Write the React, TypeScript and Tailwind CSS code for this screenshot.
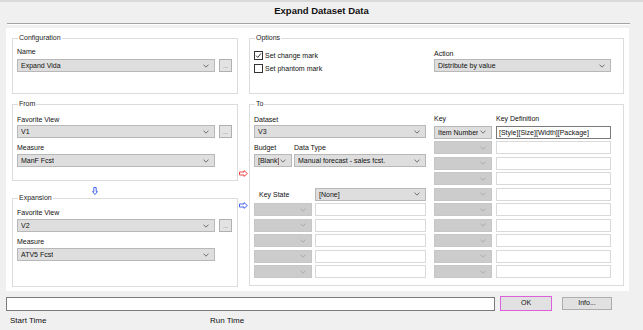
import type { ReactNode } from 'react';

function Chevron({ color = '#555' }: { color?: string }) {
  return (
    <svg width="6" height="4" viewBox="0 0 6 4" className="shrink-0">
      <path d="M0.5 0.6 L3 3.2 L5.5 0.6" fill="none" stroke={color} strokeWidth="0.8" />
    </svg>
  );
}

function Combo({ value, className = '' }: { value?: string; className?: string }) {
  return (
    <div
      className={`flex h-[13px] shrink-0 items-center justify-between border border-[#b8b8b8] bg-[#dedede] pl-[3px] pr-[5px] leading-[11px] ${className}`}
    >
      <span className="truncate">{value}</span>
      <Chevron />
    </div>
  );
}

function EmptyCombo() {
  return (
    <div className="flex h-[13px] w-[58px] shrink-0 items-center justify-end border border-[#c6c6c6] bg-[#cccccc] pr-[5px]">
      <Chevron color="#a5a5a5" />
    </div>
  );
}

function TextBox({ value, className = '' }: { value?: string; className?: string }) {
  return (
    <div
      className={`flex h-[13px] items-center border bg-white pl-[2px] leading-[11px] ${
        value ? 'border-[#7a7a7a]' : 'border-[#d9d9d9]'
      } ${className}`}
    >
      {value}
    </div>
  );
}

function DotButton() {
  return (
    <div className="flex h-[13px] w-[13px] shrink-0 items-end justify-center border border-[#b0b0b0] bg-[#e3e3e3] pb-[2px] text-[6px] leading-[6px] text-[#555]">
      ...
    </div>
  );
}

function Group({ title, className = '', children }: { title: string; className?: string; children: ReactNode }) {
  return (
    <div className={`flex flex-col border border-[#dcdcdc] pl-[4px] ${className}`}>
      <span className="-mt-[5px] ml-[1px] h-[8px] w-fit bg-white px-[1px] leading-[8px] text-[#222]">{title}</span>
      {children}
    </div>
  );
}

function Label({ children, className = '' }: { children: ReactNode; className?: string }) {
  return <span className={`h-[8px] leading-[8px] ${className}`}>{children}</span>;
}

function CheckBox({ checked, label }: { checked?: boolean; label: string }) {
  return (
    <div className="flex h-[9px] items-center gap-[2px]">
      <span className="flex h-[9px] w-[9px] items-center justify-center border border-[#333] bg-white">
        {checked && (
          <svg width="7" height="7" viewBox="0 0 7 7">
            <path d="M1 3.6 L2.8 5.4 L6 1.4" fill="none" stroke="#222" strokeWidth="0.9" />
          </svg>
        )}
      </span>
      <span className="leading-[9px]">{label}</span>
    </div>
  );
}

function RightArrow({ color }: { color: string }) {
  return (
    <svg width="9" height="7" viewBox="0 0 9 7">
      <path d="M0.5 2 H5 V0.6 L8.4 3.5 L5 6.4 V5 H0.5 Z" fill="none" stroke={color} strokeWidth="0.9" />
    </svg>
  );
}

function DownArrow() {
  return (
    <svg width="6" height="8" viewBox="0 0 6 8">
      <path d="M1.8 0.5 H4.2 V4.6 H5.5 L3 7.5 L0.5 4.6 H1.8 Z" fill="none" stroke="#3355ee" strokeWidth="0.9" />
    </svg>
  );
}

export default function App() {
  const keyRows = [0, 1, 2, 3, 4, 5, 6, 7, 8];
  const stateRows = [0, 1, 2, 3, 4];

  return (
    <div className="h-[330px] w-[643px] overflow-hidden border-t-2 border-[#dadada] bg-[#f0f0f0] font-['Liberation_Sans',Arial,sans-serif] text-[7px] text-[#111]">
      <div className="flex h-[19px] items-center justify-center text-[9.5px] font-bold">Expand Dataset Data</div>
      <div className="ml-[7px] mt-[2px] h-px w-[623px] bg-[#a3a3a3]" />
      <div className="ml-[7px] h-px w-[623px] bg-white" />

      <div className="ml-[6px] mt-[3px] flex h-[263px] w-[623px] bg-white pl-[6px] pt-[10px]">
        {/* left column */}
        <div className="flex w-[226px] flex-col">
          <Group title="Configuration" className="h-[56px]">
            <Label className="mt-[6px]">Name</Label>
            <div className="mt-[3px] flex gap-[4px]">
              <Combo value="Expand Vida" className="w-[198px]" />
              <DotButton />
            </div>
          </Group>

          <Group title="From" className="mt-[10px] h-[77px]">
            <Label className="mt-[8px]">Favorite View</Label>
            <div className="mt-[1px] flex gap-[4px]">
              <Combo value="V1" className="w-[198px]" />
              <DotButton />
            </div>
            <Label className="mt-[6px]">Measure</Label>
            <Combo value="ManF Fcst" className="mt-[2px] w-[198px]" />
          </Group>

          <div className="flex h-[17px] items-center pl-[80px] pt-[2px]">
            <DownArrow />
          </div>

          <Group title="Expansion" className="h-[89px]">
            <Label className="mt-[7px]">Favorite View</Label>
            <div className="mt-[2px] flex gap-[4px]">
              <Combo value="V2" className="w-[198px]" />
              <DotButton />
            </div>
            <Label className="mt-[6px]">Measure</Label>
            <Combo value="ATV5 Fcst" className="mt-[2px] w-[198px]" />
          </Group>
        </div>

        {/* arrow gutter */}
        <div className="flex w-[11px] flex-col items-center pt-[132px]">
          <RightArrow color="#ee3333" />
          <div className="mt-[25px]">
            <RightArrow color="#3355ee" />
          </div>
        </div>

        {/* right column */}
        <div className="flex w-[375px] flex-col">
          <Group title="Options" className="h-[56px]">
            <div className="flex gap-[8px]">
              <div className="flex w-[172px] flex-col gap-[4px] pt-[9px]">
                <CheckBox checked label="Set change mark" />
                <CheckBox label="Set phantom mark" />
              </div>
              <div className="flex w-[177px] flex-col">
                <Label className="mt-[8px]">Action</Label>
                <Combo value="Distribute by value" className="mt-[1px] w-[177px]" />
              </div>
            </div>
          </Group>

          <Group title="To" className="mt-[10px] h-[182px]">
            <div className="flex gap-[8px]">
              <div className="flex w-[172px] flex-col">
                <Label className="mt-[8px]">Dataset</Label>
                <Combo value="V3" className="mt-[1px] w-[172px]" />
                <div className="mt-[6px] flex gap-[3px]">
                  <div className="flex w-[37px] flex-col">
                    <Label>Budget</Label>
                    <Combo value="[Blank]" className="mt-[2px] w-[38px]" />
                  </div>
                  <div className="flex flex-1 flex-col">
                    <Label>Data Type</Label>
                    <Combo value="Manual forecast - sales fcst." className="mt-[2px] w-[132px]" />
                  </div>
                </div>
                <div className="mt-[20.5px] flex flex-col gap-[2.5px]">
                  <div className="flex h-[13px] gap-[3px]">
                    <span className="w-[58px] pl-[5px] leading-[13px]">Key State</span>
                    <Combo value="[None]" className="w-[111px]" />
                  </div>
                  {stateRows.map((r) => (
                    <div key={r} className="flex h-[13px] gap-[3px]">
                      <EmptyCombo />
                      <TextBox className="w-[111px]" />
                    </div>
                  ))}
                </div>
              </div>

              <div className="flex w-[177px] flex-col">
                <div className="mt-[6.5px] flex gap-[4px]">
                  <Label className="w-[58px]">Key</Label>
                  <Label>Key Definition</Label>
                </div>
                <div className="mt-[3px] flex flex-col gap-[2.5px]">
                  <div className="flex h-[13px] gap-[4px]">
                    <Combo value="Item Number" className="w-[58px]" />
                    <TextBox value="[Style][Size][Width][Package]" className="w-[115px]" />
                  </div>
                  {keyRows.map((r) => (
                    <div key={r} className="flex h-[13px] gap-[4px]">
                      <EmptyCombo />
                      <TextBox className="w-[115px]" />
                    </div>
                  ))}
                </div>
              </div>
            </div>
          </Group>
        </div>
      </div>

      <div className="ml-[6px] mt-[5px] flex items-center">
        <div className="h-[14px] w-[489px] border border-[#7a7a7a] bg-white" />
        <div className="ml-[5px] flex h-[15px] w-[52px] items-center justify-center border-[1.5px] border-[#dd5fdd] bg-[#e1e1e1] text-[7px]">
          OK
        </div>
        <div className="ml-[10px] flex h-[13px] w-[50px] items-center justify-center border border-[#adadad] bg-[#e1e1e1] text-[7px]">
          Info...
        </div>
      </div>

      <div className="mt-[6px] flex text-[8px] leading-[8px]">
        <span className="ml-[10px] w-[200px]">Start Time</span>
        <span>Run Time</span>
      </div>
    </div>
  );
}
